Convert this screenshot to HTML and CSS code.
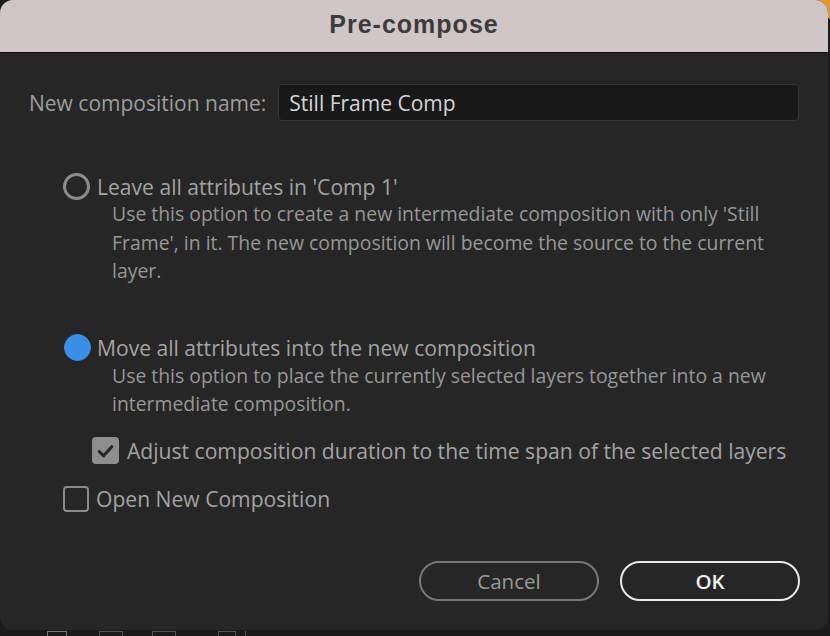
FILE: index.html
```html
<!DOCTYPE html>
<html>
<head>
<meta charset="utf-8">
<link rel="stylesheet" href="styles.css">
</head>
<body>
<div class="dialog">
  <div class="titlebar"><span class="title">Pre-compose</span></div>
  <div class="content">
    <div class="name-row">
      <label class="name-label">New composition name:</label>
      <div class="name-input">Still Frame Comp</div>
    </div>

    <div class="option first">
      <span class="radio"></span>
      <span class="opt-label">Leave all attributes in 'Comp 1'</span>
    </div>
    <p class="desc">Use this option to create a new intermediate composition with only 'Still Frame', in it. The new composition will become the source to the current layer.</p>

    <div class="option second">
      <span class="radio checked"></span>
      <span class="opt-label">Move all attributes into the new composition</span>
    </div>
    <p class="desc">Use this option to place the currently selected layers together into a new intermediate composition.</p>

    <div class="option sub">
      <span class="checkbox checked">
        <svg viewBox="0 0 28 28" width="28" height="28"><path d="M7.5 14.5 L12 19 L20.5 9.5" fill="none" stroke="#262626" stroke-width="3.2" stroke-linecap="round" stroke-linejoin="round"/></svg>
      </span>
      <span class="opt-label">Adjust composition duration to the time span of the selected layers</span>
    </div>

    <div class="option open">
      <span class="checkbox"></span>
      <span class="opt-label">Open New Composition</span>
    </div>

    <div class="buttons">
      <button class="btn cancel">Cancel</button>
      <button class="btn ok">OK</button>
    </div>
  </div>
</div>
<div class="underbar">
  <span class="ico i1"></span><span class="ico i2"></span><span class="ico i3"></span><span class="ico i4"></span><span class="ico i5"></span>
</div>
</body>
</html>
```
FILE: styles.css
```css
html, body {
  margin: 0;
  padding: 0;
}
body {
  width: 830px;
  height: 636px;
  overflow: hidden;
  background: #1c1c1c linear-gradient(225deg, #e8962a 0, #e8962a 14px, transparent 14px) no-repeat;
  font-family: "Open Sans", "Noto Sans", sans-serif;
  position: relative;
}
.dialog {
  width: 828px;
  height: 630px;
  background: #262626;
  border-radius: 13px;
  overflow: hidden;
  display: flex;
  flex-direction: column;
  position: relative;
  z-index: 1;
}
.titlebar {
  height: 52px;
  background: #cfc6c7;
  border-bottom: 1px solid #111;
  display: flex;
  align-items: center;
  justify-content: center;
}
.title {
  font-family: "Liberation Sans", Arial, sans-serif;
  font-weight: bold;
  font-size: 25px;
  color: #3e3b3b;
  letter-spacing: 1px;
  margin-top: -4px;
}
.content {
  padding: 31px 28px 0 29px;
  display: flex;
  flex-direction: column;
}
.name-row {
  display: flex;
  align-items: center;
  gap: 12px;
  padding-right: 1px;
}
.name-label {
  font-size: 21px;
  color: #9e9e9e;
}
.name-input {
  flex: 1;
  height: 35px;
  background: #181818;
  border: 1px solid #353535;
  border-radius: 4px;
  display: flex;
  align-items: center;
  padding-left: 10px;
  font-size: 21px;
  color: #d4d4d4;
}
.option {
  display: flex;
  align-items: center;
  height: 28px;
  gap: 7px;
  padding-left: 34px;
}
.option.first { margin-top: 51px; }
.option.second { margin-top: 48px; }
.option.sub { margin-top: 18px; padding-left: 63px; gap: 8px; }
.option.open { margin-top: 20px; }
.opt-label {
  font-size: 21.1px;
  color: #a3a3a3;
  white-space: nowrap;
}
.radio {
  width: 21px;
  height: 21px;
  border: 3px solid #8c8c8c;
  border-radius: 50%;
  flex: none;
}
.radio.checked {
  width: 25px;
  height: 25px;
  border: 1px solid #3a8ee6;
  background: #3a8ee6;
  margin-left: 1px;
  margin-right: -1px;
}
.checkbox {
  width: 22px;
  height: 22px;
  border: 2.5px solid #8a8a8a;
  border-radius: 4px;
  flex: none;
  display: flex;
  align-items: center;
  justify-content: center;
}
.checkbox.checked {
  width: 27px;
  height: 27px;
  border: none;
  background: #8e8e8e;
}
.desc {
  margin: 0;
  padding-left: 83px;
  width: 670px;
  font-size: 19.4px;
  line-height: 28.5px;
  color: #979797;
}
.buttons {
  display: flex;
  justify-content: flex-end;
  gap: 21px;
  margin-top: 48px;
}
.btn {
  width: 180px;
  height: 40px;
  border-radius: 20px;
  background: transparent;
  font-family: "Open Sans", "Noto Sans", sans-serif;
  font-size: 20.5px;
  padding: 0;
}
.btn.cancel {
  border: 2px solid #777;
  color: #9a9a9a;
}
.btn.ok {
  border: 2.5px solid #e9e9e9;
  color: #f2f2f2;
  font-weight: 600;
}
.underbar {
  position: absolute;
  left: 0;
  top: 630px;
  width: 830px;
  height: 6px;
  background: #1a1a1a;
}
.ico {
  position: absolute;
  top: 1px;
  height: 5px;
  border: 1px solid #555;
  border-bottom: none;
}
.i1 { left: 47px; width: 18px; border-color: #777; }
.i2 { left: 99px; width: 22px; }
.i3 { left: 152px; width: 22px; }
.i4 { left: 218px; width: 16px; }
.i5 { left: 245px; width: 2px; border-right: none; border-top: none; }
```
